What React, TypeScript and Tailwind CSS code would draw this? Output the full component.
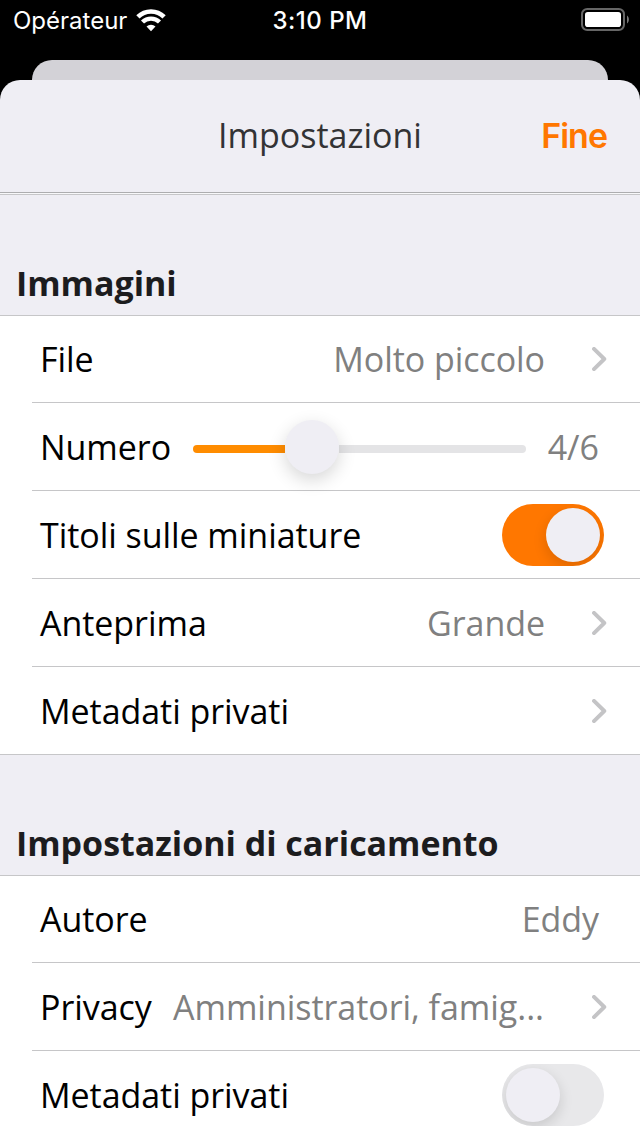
import type { ReactNode } from "react";

function WifiIcon() {
  return (
    <svg className="ml-[9px] mt-[9px] h-[23px] w-[30px]" viewBox="0 0 30 23" fill="none">
      <path d="M1.9 7.9 A18.6 18.6 0 0 1 28.1 7.9" stroke="#fff" strokeWidth="4.6" />
      <path d="M6.5 13.1 A12 12 0 0 1 23.5 13.1" stroke="#fff" strokeWidth="4.3" />
      <path d="M15 22.2 L10.5 17.5 A6.4 6.4 0 0 1 19.5 17.5 Z" fill="#fff" />
    </svg>
  );
}

function BatteryIcon() {
  return (
    <svg className="mt-2 h-[23px] w-[48px]" viewBox="0 0 48 23" fill="none">
      <rect x="1" y="1" width="42" height="21" rx="5.2" stroke="#666" strokeWidth="2" />
      <rect x="4" y="4" width="36" height="15" rx="2.8" fill="#fff" />
      <path d="M46 7.5 C48.5 9 48.5 14 46 15.5 Z" fill="#777" />
    </svg>
  );
}

function Chevron() {
  return (
    <svg className="ml-[46px] mr-[33px] mt-8 h-6 w-4 shrink-0" viewBox="0 0 16 24" fill="none">
      <path d="M3 1.9 L13.3 12 L3 22.1" stroke="#c4c4c6" strokeWidth="3.9" strokeLinecap="round" strokeLinejoin="round" />
    </svg>
  );
}

function Row({ label, last, children }: { label: string; last?: boolean; children?: ReactNode }) {
  return (
    <div className={last ? "h-[88px]" : "ml-8 h-[88px] border-b border-[#c6c6c8]"}>
      <div className={last ? "ml-8 flex h-full items-start pl-2" : "flex h-full items-start pl-2"}>
        <span className="mt-[21px] shrink-0 whitespace-nowrap leading-[46px] tracking-[-0.05px] text-black">{label}</span>
        {children}
      </div>
    </div>
  );
}

function Value({ text }: { text: string }) {
  return <span className="ml-auto mt-[21px] whitespace-nowrap leading-[46px] tracking-[-0.06px] text-[#808080]">{text}</span>;
}

function Toggle({ on }: { on: boolean }) {
  return (
    <div
      className={
        on
          ? "ml-auto mr-9 mt-[13px] flex h-[62px] w-[102px] justify-end overflow-hidden rounded-full bg-[#ff7700] p-1"
          : "ml-auto mr-9 mt-[13px] flex h-[62px] w-[102px] overflow-hidden rounded-full bg-[#e8e8ea] p-1"
      }
    >
      <div className="size-[54px] rounded-full bg-[#efeef4] shadow-[0_5px_14px_rgba(0,0,0,0.14)]" />
    </div>
  );
}

function Slider() {
  return (
    <div className="mr-[22px] ml-auto mt-4 flex h-[55px] w-[333px] shrink-0 items-center">
      <div className="mt-1 h-2 w-[92px] rounded-l-full bg-[#ff8c00]" />
      <div className="z-10 size-[54px] shrink-0 rounded-full bg-[#efeef4] shadow-[0_6px_18px_rgba(0,0,0,0.16)]" />
      <div className="mt-1 h-2 flex-1 rounded-r-full bg-[#e4e4e6]" />
    </div>
  );
}

function SectionTitle({ children }: { children: ReactNode }) {
  return (
    <h2 className="flex h-[121px] items-end border-b border-[#c6c6c8] pb-[9px] pl-4 font-bold leading-[46px] tracking-[-0.02px] text-[#1c1c1e]">
      {children}
    </h2>
  );
}

export default function App() {
  return (
    <div className="flex h-[1136px] w-[640px] flex-col overflow-hidden bg-black font-['Open_Sans',sans-serif] text-[34px]">
      <div className="grid h-[60px] shrink-0 grid-cols-3 pl-[13px] pr-[11px] font-['Inter',sans-serif] text-2xl leading-[42px] text-white">
        <div className="flex items-start">
          <span>Opérateur</span>
          <WifiIcon />
        </div>
        <div className="-ml-[2px] text-center font-medium tracking-[0.5px]">3:10 PM</div>
        <div className="flex justify-end">
          <BatteryIcon />
        </div>
      </div>
      <div className="mx-8 h-5 shrink-0 rounded-t-[20px] bg-[#d3d2d7]" />
      <div className="flex flex-1 flex-col rounded-t-[20px] bg-[#efeef4]">
        <header className="grid h-[115px] shrink-0 grid-cols-[1fr_auto_1fr] border-b border-[#c6c6c8]">
          <h1 className="col-start-2 mt-8 leading-[46px] text-[#333335]">Impostazioni</h1>
          <button className="mr-[33px] mt-[33px] self-start justify-self-end font-['Inter',sans-serif] font-semibold leading-[46px] tracking-[-1px] text-[#ff7700]">
            Fine
          </button>
          <div className="col-span-3 mt-auto h-[2px] border-t border-[#adadaf] bg-[#f8f8fa]" />
        </header>
        <SectionTitle>Immagini</SectionTitle>
        <section className="-mt-px border-y border-[#c6c6c8] bg-white">
          <div className="-mt-px">
            <Row label="File">
              <Value text="Molto piccolo" />
              <Chevron />
            </Row>
            <Row label="Numero">
              <Slider />
              <span className="mr-[41px] mt-[21px] leading-[46px] text-[#808080]">4/6</span>
            </Row>
            <Row label="Titoli sulle miniature">
              <Toggle on />
            </Row>
            <Row label="Anteprima">
              <Value text="Grande" />
              <Chevron />
            </Row>
            <div className="-mb-px">
              <Row label="Metadati privati" last>
                <div className="ml-auto" />
                <Chevron />
              </Row>
            </div>
          </div>
        </section>
        <SectionTitle>Impostazioni di caricamento</SectionTitle>
        <section className="-mt-px flex-1 border-t border-[#c6c6c8] bg-white">
          <div className="-mt-px">
            <Row label="Autore">
              <Value text="Eddy" />
              <div className="w-[41px] shrink-0" />
            </Row>
            <Row label="Privacy">
              <span className="ml-auto mt-[21px] w-[372px] shrink-0 whitespace-nowrap leading-[46px] tracking-[-0.04px] text-[#808080]">
                Amministratori, famig...
              </span>
              <Chevron />
            </Row>
            <Row label="Metadati privati" last>
              <Toggle on={false} />
            </Row>
          </div>
        </section>
      </div>
    </div>
  );
}
